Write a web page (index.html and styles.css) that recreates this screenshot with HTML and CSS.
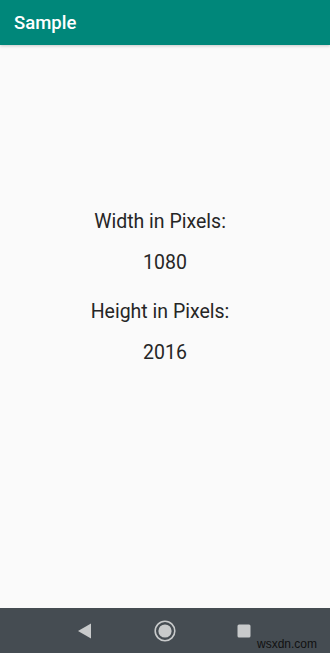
FILE: index.html
```html
<!DOCTYPE html>
<html lang="en">
  <head>
    <meta charset="UTF-8" />
    <meta name="viewport" content="width=device-width, initial-scale=1.0" />
    <title>Sample</title>
    <link rel="stylesheet" href="styles.css">
  </head>
  <body>
    <div class="app">
      <div class="app-bar">Sample</div>
      <div class="content">
        <div class="label">Width in Pixels:</div>
        <div class="value">1080</div>
        <div class="label second">Height in Pixels:</div>
        <div class="value">2016</div>
      </div>
      <div class="nav-bar">
        <svg class="nav-icon" width="16" height="16" viewBox="0 0 16 16">
          <path d="M14 0.5 L14 15.5 L1 8 Z" fill="#c8cacb" />
        </svg>
        <svg class="nav-icon" width="22" height="22" viewBox="0 0 22 22">
          <circle cx="11" cy="11" r="9.8" fill="none" stroke="#c8cacb" stroke-width="1.6" />
          <circle cx="11" cy="11" r="6.6" fill="#c8cacb" />
        </svg>
        <svg class="nav-icon" width="14" height="14" viewBox="0 0 14 14">
          <rect x="0.5" y="0.5" width="13" height="13" rx="1.5" fill="#c8cacb" />
        </svg>
        <span class="watermark">wsxdn.com</span>
      </div>
    </div>
  </body>
</html>
```

FILE: styles.css
```css
html, body {
  margin: 0;
  padding: 0;
}
body {
  font-family: Roboto, "Noto Sans", sans-serif;
  background-color: #fafafa;
}
.app {
  width: 330px;
  height: 653px;
  display: flex;
  flex-direction: column;
}
.app-bar {
  height: 45px;
  box-sizing: border-box;
  padding-left: 14px;
  display: flex;
  align-items: center;
  background-color: #00877a;
  color: #fff;
  font-size: 18.5px;
  font-weight: 500;
  box-shadow: 0 1px 3px rgba(0, 0, 0, 0.2);
  position: relative;
  z-index: 1;
}
.content {
  flex: 1;
  display: flex;
  flex-direction: column;
  align-items: center;
  padding-top: 165px;
  color: #262626;
  font-size: 19.5px;
  line-height: 24px;
}
.label {
  padding-right: 10px;
}
.value {
  margin-top: 17px;
}
.label.second {
  margin-top: 25px;
}
.nav-bar {
  height: 45px;
  flex-shrink: 0;
  background-color: #454c52;
  display: flex;
  align-items: center;
  justify-content: center;
  gap: 61px;
  padding-right: 2px;
  position: relative;
}
.nav-icon {
  display: block;
}
.watermark {
  position: absolute;
  left: 257px;
  bottom: 2px;
  font-family: "Liberation Sans", Arial, sans-serif;
  font-size: 12px;
  color: #111;
}
```
